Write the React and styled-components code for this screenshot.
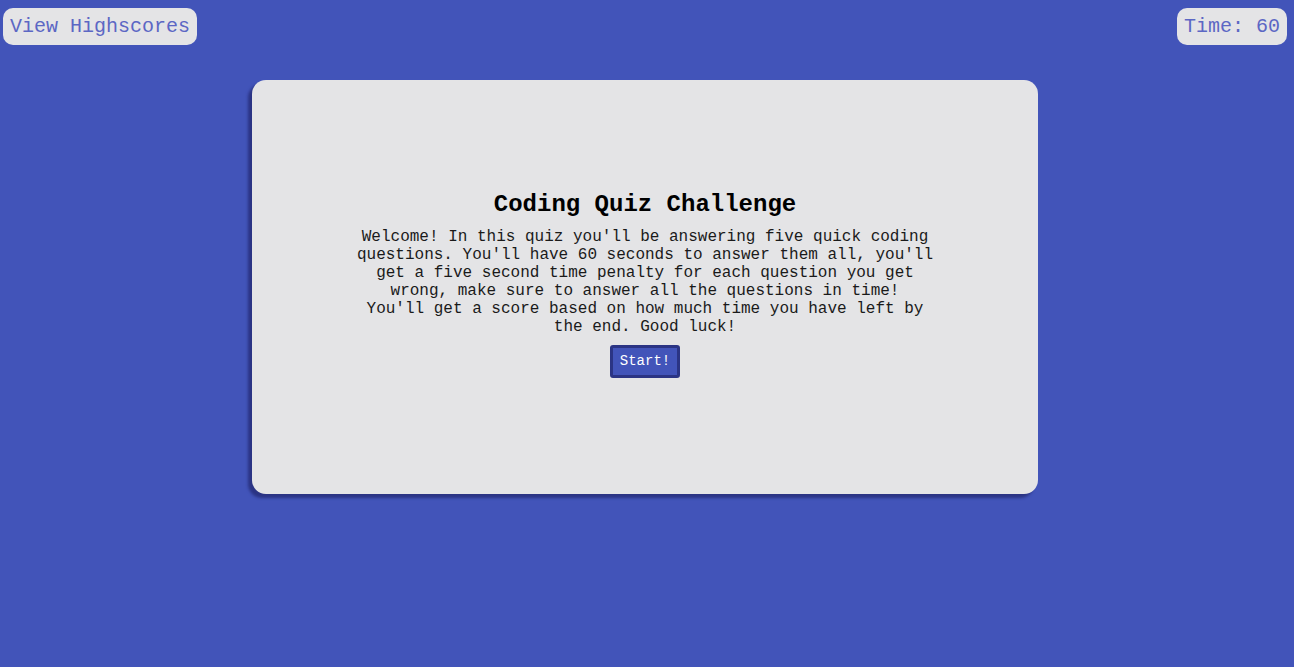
import styled, { createGlobalStyle } from "styled-components";

const GlobalStyle = createGlobalStyle`
  html, body {
    margin: 0;
    padding: 0;
    background: #4254b9;
    font-family: "Liberation Mono", "Courier New", monospace;
  }
`;

export default function App() {
  return (
    <>
      <GlobalStyle />
      <Page>
        <Header>
          <Pill as="button">View Highscores</Pill>
          <Pill>Time: 60</Pill>
        </Header>
        <Card>
          <Title>Coding Quiz Challenge</Title>
          <Intro>
            Welcome! In this quiz you'll be answering five quick coding
            questions. You'll have 60 seconds to answer them all, you'll get a
            five second time penalty for each question you get wrong, make sure
            to answer all the questions in time!
            <br />
            You'll get a score based on how much time you have left by the end.
            Good luck!
          </Intro>
          <StartButton>Start!</StartButton>
        </Card>
      </Page>
    </>
  );
}

const Page = styled.div`
  min-height: 667px;
  display: flex;
  flex-direction: column;
  align-items: center;
`;

const Header = styled.header`
  align-self: stretch;
  display: flex;
  justify-content: space-between;
  align-items: flex-start;
  padding: 8px 7px 0 3px;
`;

const Pill = styled.div`
  display: flex;
  align-items: center;
  height: 37px;
  box-sizing: border-box;
  padding: 0 7px;
  border: none;
  border-radius: 10px;
  background: #e4e4e6;
  color: #5c67c4;
  font-family: "Liberation Mono", "Courier New", monospace;
  font-size: 20px;
  cursor: pointer;
`;

const Card = styled.main`
  margin: 35px 4px 0 0;
  width: 786px;
  height: 414px;
  box-sizing: border-box;
  border-radius: 14px;
  background: #e4e4e6;
  box-shadow: -4px 4px 3px #2b3484;
  display: flex;
  flex-direction: column;
  align-items: center;
  justify-content: center;
  padding-bottom: 6px;
`;

const Title = styled.h1`
  margin: 0 0 10px;
  font-size: 24px;
  font-weight: bold;
  color: #000;
`;

const Intro = styled.p`
  margin: 0 0 9px;
  width: 590px;
  text-align: center;
  font-size: 16px;
  line-height: 18px;
  color: #1a1a1a;
`;

const StartButton = styled.button`
  width: 70px;
  height: 33px;
  background: #4254b9;
  color: #fff;
  border: 3px solid #2b3484;
  border-radius: 3px;
  font-family: "Liberation Mono", "Courier New", monospace;
  font-size: 14px;
  cursor: pointer;
`;
